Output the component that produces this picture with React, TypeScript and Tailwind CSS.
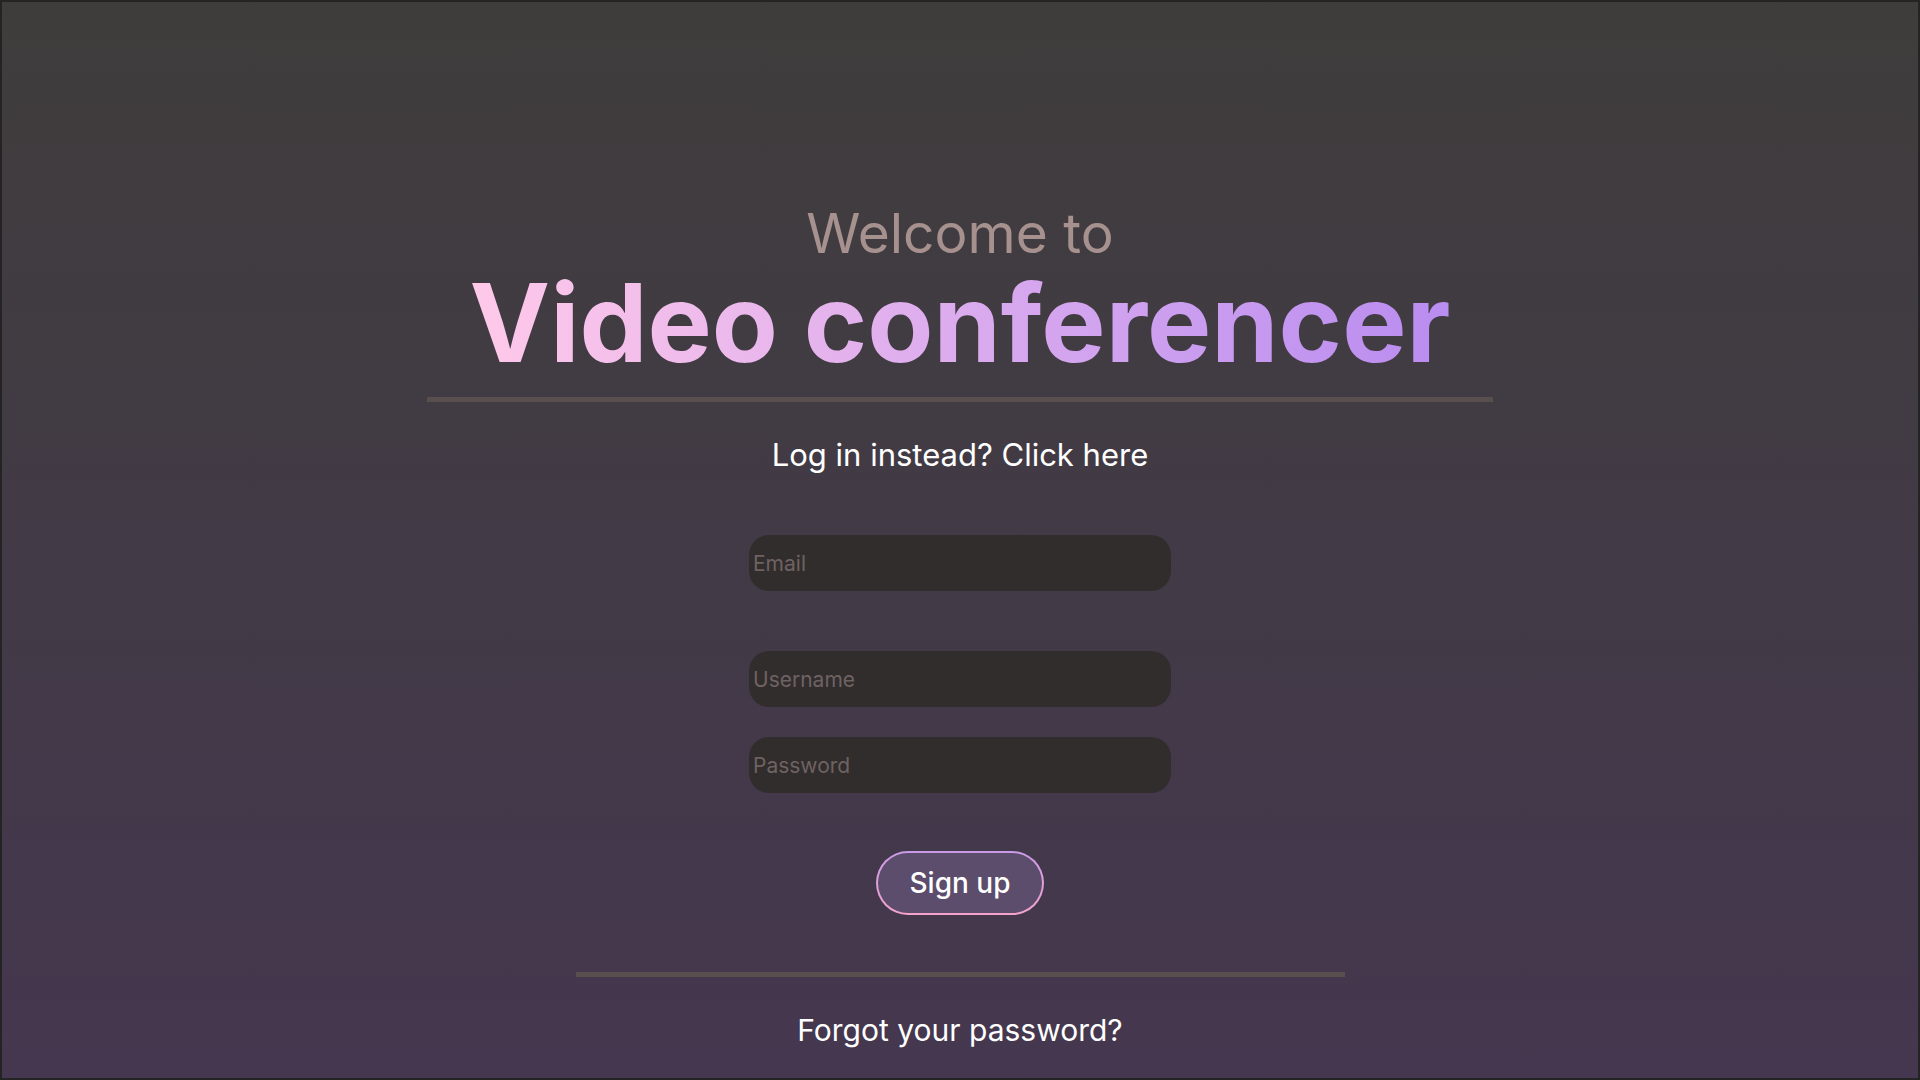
import React from 'react';

const inputClass =
    "w-[422px] h-[56px] rounded-[20px] bg-[#322d2d] pl-[4px] text-[21px] text-[#d8d0d0] placeholder:text-[#6e6262] outline-none";

const Field = ({ placeholder, type = "text" }: { placeholder: string; type?: string }) => (
    <input type={type} placeholder={placeholder} className={inputClass} />
);

const App = () => {
    return (
        <div
            className="h-screen w-full overflow-hidden border-2 border-[#242424] bg-linear-to-b from-[#3f3d3c] to-[#45374f] flex flex-col items-center"
            style={{ fontFamily: "Inter, 'Noto Sans', sans-serif" }}
        >
            <h1 className="mt-[204px] flex flex-col items-center">
                <span className="text-[55px] leading-none text-[#a6918f] font-normal">Welcome to</span>
                <span className="mt-[8px] text-[108px] leading-none font-bold bg-linear-to-r from-[#ffc9e9] to-[#b98cf0] bg-clip-text text-transparent">
                    Video conferencer
                </span>
            </h1>

            <div className="mt-[20px] w-[1066px] h-[5px] bg-[#5a4f4f]" />

            <a href="#" className="mt-[37px] text-[31px] leading-none text-white">
                Log in instead? Click here
            </a>

            <form className="mt-[65px] flex flex-col items-center" onSubmit={(e) => e.preventDefault()}>
                <Field placeholder="Email" type="email" />
                <div className="mt-[60px] flex flex-col gap-[30px]">
                    <Field placeholder="Username" />
                    <Field placeholder="Password" type="password" />
                </div>

                {/* gradient border around the pill */}
                <div className="mt-[58px] rounded-full p-[2px] bg-linear-to-b from-[#c99ae6] to-[#f5a3cb]">
                    <button
                        type="submit"
                        className="w-[164px] h-[60px] rounded-full bg-[#5b4d6b] text-white text-[28px] font-medium leading-none"
                    >
                        Sign up
                    </button>
                </div>
            </form>

            <div className="mt-[57px] w-[769px] h-[5px] bg-[#5a4f4f]" />

            <a href="#" className="mt-[38px] text-[30px] leading-none text-white">
                Forgot your password?
            </a>
        </div>
    );
};

export default App;
